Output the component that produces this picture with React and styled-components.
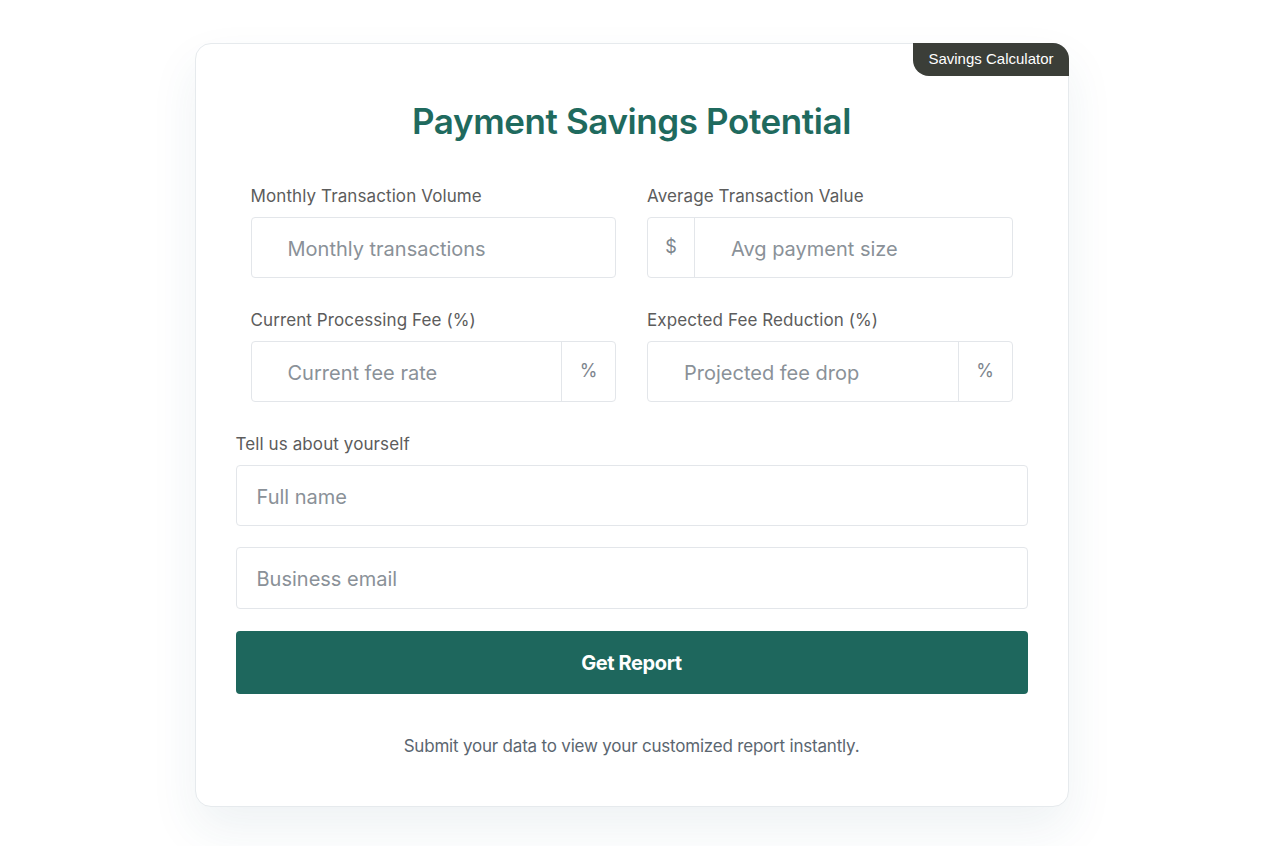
import React from "react";
import styled, { createGlobalStyle } from "styled-components";

const GlobalStyle = createGlobalStyle`
  * {
    box-sizing: border-box;
  }
  body {
    margin: 0;
    background: #ffffff;
    font-family: "Inter", "Noto Sans", sans-serif;
  }
`;

const Page = styled.main`
  display: flex;
  justify-content: center;
  padding: 43px 17px 60px 0;
`;

const Card = styled.section`
  position: relative;
  width: 874px;
  padding: 56px 40px 49px;
  background: #ffffff;
  border: 1px solid #e6eaed;
  border-radius: 16px;
  box-shadow: 0 22px 48px rgba(40, 90, 120, 0.08);
`;

const Badge = styled.div`
  position: absolute;
  top: -1px;
  right: -1px;
  padding: 8px 15px 9px;
  background: #3b3e38;
  color: #ffffff;
  font-family: "Liberation Sans", Arial, sans-serif;
  font-size: 15px;
  line-height: 16px;
  border-radius: 0 16px 0 16px;
`;

const Title = styled.h1`
  margin: 0 0 43px;
  text-align: center;
  color: #1f6a5e;
  font-size: 35px;
  line-height: 43px;
  font-weight: 600;
  letter-spacing: -0.4px;
`;

const Grid = styled.div`
  display: grid;
  grid-template-columns: minmax(0, 1fr) minmax(0, 1fr);
  column-gap: 31px;
  row-gap: 32px;
  padding: 0 15px;
  margin-bottom: 32px;
`;

const Field = styled.div`
  display: flex;
  flex-direction: column;
`;

const Label = styled.label`
  display: block;
  margin-bottom: 10px;
  color: #5c5c5c;
  font-size: 17px;
  line-height: 21px;
  letter-spacing: 0.1px;
`;

const InputBox = styled.div`
  display: flex;
  height: ${(p) => p.$height || 61}px;
  border: 1px solid #e3e6ea;
  border-radius: 4px;
  background: #ffffff;
  overflow: hidden;
`;

const Addon = styled.span`
  display: flex;
  align-items: center;
  justify-content: center;
  flex: 0 0 ${(p) => p.$width}px;
  color: #7d858d;
  font-size: 18px;
  padding-bottom: 3px;
  ${(p) => (p.$side === "left" ? "border-right" : "border-left")}: 1px solid #e3e6ea;
`;

const Input = styled.input`
  flex: 1;
  min-width: 0;
  border: none;
  outline: none;
  background: transparent;
  padding: 2px 0 0 ${(p) => p.$pad || 36}px;
  font-family: inherit;
  font-size: 20px;
  color: #333;
  letter-spacing: 0;

  &::placeholder {
    color: #8a9198;
  }
`;

const Stack = styled.div`
  display: flex;
  flex-direction: column;
  gap: 21px;
`;

const Button = styled.button`
  height: 63px;
  margin-top: 1px;
  border: none;
  border-radius: 4px;
  background: #1e675d;
  color: #ffffff;
  font-family: inherit;
  font-size: 20px;
  font-weight: 700;
  letter-spacing: -0.4px;
  cursor: pointer;
`;

const Note = styled.p`
  margin: 42px 0 0;
  text-align: center;
  color: #5b6670;
  font-size: 17px;
  line-height: 21px;
  letter-spacing: -0.2px;
`;

const TextField = ({ label, placeholder, prefix, suffix }) => (
  <Field>
    <Label>{label}</Label>
    <InputBox>
      {prefix && (
        <Addon $side="left" $width={47}>
          {prefix}
        </Addon>
      )}
      <Input placeholder={placeholder} />
      {suffix && (
        <Addon $side="right" $width={54}>
          {suffix}
        </Addon>
      )}
    </InputBox>
  </Field>
);

export default function App() {
  return (
    <>
      <GlobalStyle />
      <Page>
        <Card>
          <Badge>Savings Calculator</Badge>
          <Title>Payment Savings Potential</Title>
          <Grid>
            <TextField label="Monthly Transaction Volume" placeholder="Monthly transactions" />
            <TextField label="Average Transaction Value" placeholder="Avg payment size" prefix="$" />
            <TextField label="Current Processing Fee (%)" placeholder="Current fee rate" suffix="%" />
            <TextField label="Expected Fee Reduction (%)" placeholder="Projected fee drop" suffix="%" />
          </Grid>
          <Label>Tell us about yourself</Label>
          <Stack>
            <InputBox>
              <Input placeholder="Full name" $pad={20} />
            </InputBox>
            <InputBox $height={62}>
              <Input placeholder="Business email" $pad={20} />
            </InputBox>
            <Button>Get Report</Button>
          </Stack>
          <Note>Submit your data to view your customized report instantly.</Note>
        </Card>
      </Page>
    </>
  );
}
